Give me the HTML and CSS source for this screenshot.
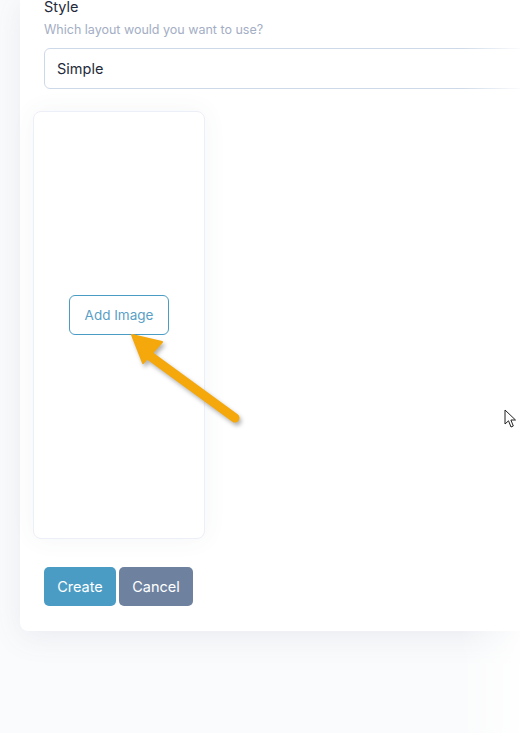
FILE: index.html
```html
<html lang="en-US">
<head>
  <meta charset="UTF-8">
  <meta name="viewport" content="width=device-width">
  <title>New Gallery</title>
  <link rel="stylesheet" href="styles.css">
</head>

<body>

<div class="card">
  <label class="label" for="style">Style</label>
  <p class="hint">Which layout would you want to use?</p>
  <div class="input" id="style">Simple</div>

  <div class="panel">
    <button class="add">Add Image</button>
  </div>

  <div class="actions">
    <button class="btn create">Create</button>
    <button class="btn cancel">Cancel</button>
  </div>
</div>

<div class="fade"></div>

<!-- callout arrow drawn over the screenshot -->
<svg class="arrow" width="130" height="110" viewBox="0 0 130 110">
  <path d="M30 22 L115 84" stroke="#f5a80b" stroke-width="9" stroke-linecap="round" fill="none"/>
  <path d="M12 1 L42 8 L23 29 Z" fill="#f5a80b" stroke="#f5a80b" stroke-width="2" stroke-linejoin="round"/>
</svg>

<svg class="cursor" width="14" height="21" viewBox="0 0 14 21">
  <path d="M1 1 L1 15 L4.5 11.8 L7 18 L9.3 17 L6.9 11 L11.5 11 Z" fill="#fff" stroke="#222" stroke-width="1" stroke-linejoin="round"/>
</svg>

</body>
</html>
```

FILE: styles.css
```css
body {
    margin: 0;
    height: 733px;
    overflow: hidden;
    background: #fafbfc;
    font-family: Inter, "Noto Sans", sans-serif;
    color: #1f2a3a;
}
.card {
    margin: -3px 0 0 20px;
    width: 620px;
    padding: 0 0 25px 24px;
    background: #fff;
    border-radius: 0 0 8px 8px;
    box-shadow: 0 6px 30px rgba(80, 100, 140, 0.10);
}
.label {
    display: block;
    font-size: 14.5px;
    line-height: 20px;
}
.hint {
    margin: 5px 0 0;
    font-size: 12.5px;
    line-height: 16px;
    color: #a3aec4;
}
.input {
    margin-top: 10px;
    height: 39px;
    border: 1px solid #cdd9e8;
    border-radius: 6px;
    padding: 0 12px;
    font-size: 14.5px;
    line-height: 39px;
    color: #1f2a3a;
}
.panel {
    margin: 22px 0 0 -11px;
    width: 170px;
    height: 426px;
    border: 1px solid #eceef8;
    border-radius: 8px;
    box-shadow: 0 0 24px rgba(60, 80, 120, 0.06);
    display: flex;
    align-items: center;
    justify-content: center;
}
.add {
    margin-top: -21px;
    width: 100px;
    height: 40px;
    background: #fff;
    border: 1px solid #4a9cc4;
    border-radius: 6px;
    color: #5a9fc6;
    font-family: inherit;
    font-size: 13.5px;
}
.actions {
    margin-top: 28px;
    display: flex;
    gap: 3px;
}
.btn {
    height: 39px;
    border: none;
    border-radius: 5px;
    color: #fff;
    font-family: inherit;
    font-size: 14.5px;
}
.create {
    width: 72px;
    background: #4a9cc4;
}
.cancel {
    width: 74px;
    background: #6e82a0;
}
.arrow {
    position: absolute;
    left: 120px;
    top: 334px;
    filter: drop-shadow(2px 3px 2px rgba(0, 0, 0, 0.3));
}
.cursor {
    position: absolute;
    left: 504px;
    top: 409px;
}
.fade {
    position: absolute;
    top: 0;
    right: 0;
    width: 60px;
    height: 733px;
    background: linear-gradient(to right, rgba(255,255,255,0), rgba(255,255,255,0.9));
}
```
